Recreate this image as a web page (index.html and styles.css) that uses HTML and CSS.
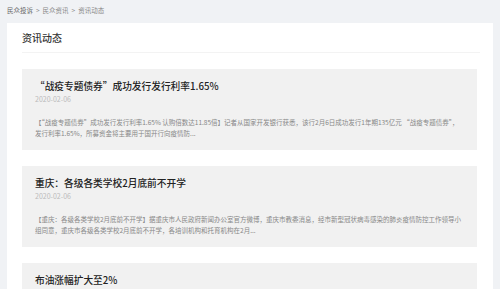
FILE: index.html
```html
<!DOCTYPE html>
<html lang="zh-CN">
 <head>
  <meta charset="utf-8">
  <title>资讯动态</title>
  <link rel="stylesheet" href="styles.css">
 </head>
 <body>
  <div class="crumb">
	<a href="#">民众投诉</a><span class="sep">&gt;</span><a href="#">民众资讯</a><span class="sep">&gt;</span><span class="cur">资讯动态</span>
  </div>
  <div class="panel">
	<div class="panel-hd">资讯动态</div>
	<ul class="news">
		<li class="item">
			<h3>“战疫专题债券”成功发行发行利率1.65%</h3>
			<p class="date">2020-02-06</p>
			<p class="desc">【“战疫专题债券”成功发行发行利率1.65% 认购倍数达11.85倍】记者从国家开发银行获悉，该行2月6日成功发行1年期135亿元 “战疫专题债券”，发行利率1.65%，所募资金将主要用于国开行向疫情防...</p>
		</li>
		<li class="item">
			<h3>重庆：各级各类学校2月底前不开学</h3>
			<p class="date">2020-02-06</p>
			<p class="desc">【重庆：各级各类学校2月底前不开学】据重庆市人民政府新闻办公室官方微博，重庆市教委消息，经市新型冠状病毒感染的肺炎疫情防控工作领导小组同意，重庆市各级各类学校2月底前不开学，各培训机构和托育机构在2月...</p>
		</li>
		<li class="item">
			<h3>布油涨幅扩大至2%</h3>
			<p class="date">2020-02-06</p>
			<p class="desc">布油涨幅扩大至2%。</p>
		</li>
	</ul>
  </div>
 </body>
</html>
```

FILE: styles.css
```css
*{margin:0;padding:0;}
html,body{
	background:#f0f2f5;
}
body{
	padding:3px 7px 0;
	font-family:"Noto Sans CJK SC","Noto Sans",sans-serif;
	color:#333;
}
.crumb{
	font-size:6.5px;
	line-height:14px;
	color:#888;
	margin-bottom:6px;
}
.crumb a{
	color:#888;
	text-decoration:none;
}
.crumb a:first-child{
	color:#666;
}
.crumb .sep{
	margin:0 3px;
}
.panel{
	background:#fff;
	padding:8px 16px 0 15px;
	height:300px;
}
.panel-hd{
	font-size:10px;
	line-height:14px;
	font-weight:500;
	color:#333;
	padding-bottom:7px;
	border-bottom:1px solid #f3f3f3;
	margin-right:-3px;
	margin-bottom:16px;
}
.news{
	list-style:none;
}
.item{
	background:#f1f1f1;
	padding:10px 14px 11px 13px;
	margin-bottom:16px;
}
.item h3{
	font-size:9.7px;
	line-height:14px;
	font-weight:500;
	color:#222;
}
.date{
	font-size:7px;
	line-height:12px;
	color:#bbb;
}
.desc{
	margin-top:12px;
	font-size:6.5px;
	line-height:11px;
	color:#888;
	height:22px;
	overflow:hidden;
}
```
